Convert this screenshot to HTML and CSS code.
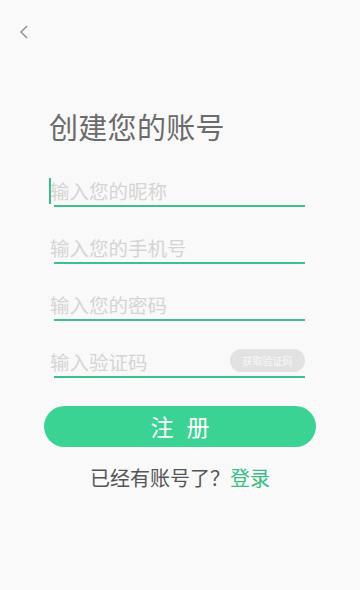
FILE: index.html
```html
<!DOCTYPE html>
<html lang="zh">
<head>
<meta charset="utf-8">
<link rel="stylesheet" href="styles.css">
</head>
<body>
<div class="page">
  <div class="topbar">
    <svg class="back" width="12" height="16" viewBox="0 0 12 16"><path d="M9 2 L3 8 L9 14" fill="none" stroke="#8a8a8a" stroke-width="1.4"/></svg>
  </div>
  <h1 class="title">创建您的账号</h1>
  <div class="form">
    <div class="field">
      <div class="row"><span class="caret"></span><span class="ph">输入您的昵称</span></div>
      <div class="line"></div>
    </div>
    <div class="field">
      <div class="row"><span class="ph">输入您的手机号</span></div>
      <div class="line"></div>
    </div>
    <div class="field">
      <div class="row"><span class="ph">输入您的密码</span></div>
      <div class="line"></div>
    </div>
    <div class="field">
      <div class="row"><span class="ph">输入验证码</span><span class="code">获取验证码</span></div>
      <div class="line"></div>
    </div>
  </div>
  <div class="btn">注册</div>
  <div class="login">已经有账号了？<span class="link">登录</span></div>
</div>
</body>
</html>
```
FILE: styles.css
```css
html, body {
  margin: 0;
  padding: 0;
  background: #f9f9f9;
  font-family: "Noto Sans CJK SC", "Noto Sans", sans-serif;
}
.page {
  width: 360px;
  height: 590px;
  display: flex;
  flex-direction: column;
}
.topbar {
  height: 60px;
  padding: 24px 0 0 18px;
  box-sizing: border-box;
}
.back { display: block; }
.title {
  margin: 46px 0 0 49px;
  font-size: 29px;
  line-height: 40px;
  font-weight: 400;
  color: #6b6b6b;
  letter-spacing: 0.3px;
}
.form {
  margin: 31px 0 0 49px;
  display: flex;
  flex-direction: column;
  gap: 27px;
}
.field {
  width: 257px;
}
.row {
  height: 28px;
  display: flex;
  align-items: center;
  position: relative;
}
.caret {
  position: absolute;
  left: 0;
  top: 1px;
  width: 2px;
  height: 26px;
  background: #3dbd8a;
}
.ph {
  font-size: 19.5px;
  line-height: 28px;
  color: #d4d4d4;
  margin-left: 1px;
  flex: 1;
}
.code {
  align-self: flex-end;
  width: 75px;
  height: 23px;
  border-radius: 12px;
  background: #e2e2e2;
  color: #f8f8f8;
  font-size: 10px;
  line-height: 23px;
  text-align: center;
  margin: 0 1px 4px 0;
}
.line {
  margin-left: 5px;
  width: 251px;
  height: 2px;
  background: #3fbf8b;
}
.btn {
  margin: 28px 0 0 44px;
  width: 272px;
  height: 41px;
  border-radius: 21px;
  background: #3bd394;
  color: #fff;
  font-size: 23px;
  line-height: 41px;
  text-align: center;
  letter-spacing: 13px;
  text-indent: 13px;
}
.login {
  margin-top: 17px;
  text-align: center;
  font-size: 20px;
  line-height: 28px;
  color: #555;
}
.link { color: #38bd84; }
```
